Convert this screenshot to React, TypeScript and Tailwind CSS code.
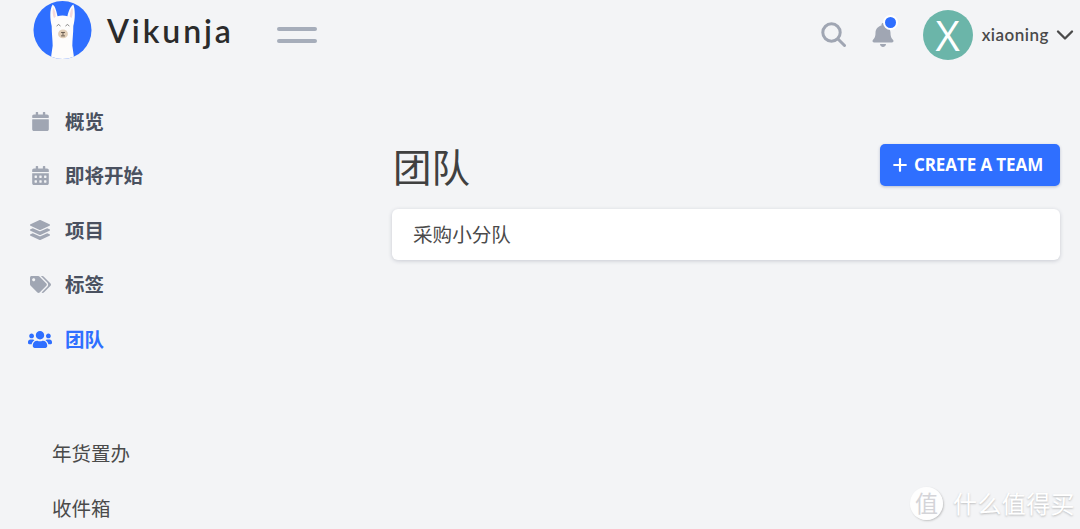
import { FaBell, FaCalendar, FaCalendarAlt, FaLayerGroup, FaTags, FaUsers } from "react-icons/fa";
import { FiChevronDown, FiPlus } from "react-icons/fi";

const cjk = "font-['Open_Sans','Noto_Sans_CJK_SC',sans-serif]";

const navItems = [
  { label: "概览", Icon: FaCalendar, size: "text-[19px]" },
  { label: "即将开始", Icon: FaCalendarAlt, size: "text-[19px]" },
  { label: "项目", Icon: FaLayerGroup, size: "text-[20px]" },
  { label: "标签", Icon: FaTags, size: "text-[21px]" },
  { label: "团队", Icon: FaUsers, size: "text-[25px]", active: true },
];

const Logo = () => (
  <svg viewBox="0 0 60 60" className="w-[59px] h-[60px]">
    <defs>
      <clipPath id="logo-clip">
        <circle cx="30" cy="30" r="29.5" />
      </clipPath>
    </defs>
    <circle cx="30" cy="30" r="29.5" fill="#2f6fff" />
    <g clipPath="url(#logo-clip)">
      <path
        d="M19 26 C17 18 17 8 20 4 C23 6 24 12 25 16 C28 15 32 15 35 16 C36 11 38 6 41 4 C43 9 43 18 41 26 C41 34 40 40 40 46 L42 60 L18 60 L20 46 C20 40 19 34 19 26 Z"
        fill="#fdfcfb"
      />
      <path d="M20.5 7 C19.5 11 20 15 21.5 18 L23 16 C23 12 22 9 20.5 7 Z" fill="#f3d9dc" />
      <path d="M40 7 C41 11 40.5 15 39 18 L37.5 16 C37.5 12 38.5 9 40 7 Z" fill="#f3d9dc" />
      <path d="M24 26 l2 -1.6 l2 1.6 M33 26 l2 -1.6 l2 1.6" stroke="#555" strokeWidth="0.7" fill="none" />
      <ellipse cx="30.5" cy="34" rx="5" ry="4.5" fill="#e2cfb8" />
      <path d="M28.5 32.5 h4 M30.5 32.5 v3 M28.5 36 h4" stroke="#4a4038" strokeWidth="0.8" fill="none" />
    </g>
  </svg>
);

const SearchIcon = () => (
  <svg viewBox="0 0 25 25" className="w-[25px] h-[25px]" fill="none" stroke="#a0a6b3" strokeWidth="3" strokeLinecap="round">
    <circle cx="10.5" cy="10.5" r="8.7" />
    <path d="M17 17 L23.5 23.5" />
  </svg>
);

export default function App() {
  return (
    <div className={`relative w-[1080px] h-[529px] overflow-hidden bg-[#f3f4f6] text-[#404040] ${cjk}`}>
      <header className="h-[60px] flex items-center">
        <div className="ml-[33px]">
          <Logo />
        </div>
        <span className="ml-[15px] w-[126px] text-[32px] leading-none font-['Lato',sans-serif] font-semibold tracking-[2.9px] text-[#2b2b2b] mt-[2px]">
          Vikunja
        </span>
        <div className="ml-[44px] w-10 flex flex-col gap-[8px] mt-[10px]">
          <div className="h-1 rounded-full bg-[#a6adba]" />
          <div className="h-1 rounded-full bg-[#a6adba]" />
        </div>
        <div className="ml-auto mt-[9px]">
          <SearchIcon />
        </div>
        <div className="relative ml-[25px] mt-[10px]">
          <FaBell className="text-[24px] text-[#a0a6b3]" />
          <div className="absolute -top-[8px] right-[-3px] w-[11px] h-[11px] rounded-full bg-[#2f6fff] border-2 border-white box-content" />
        </div>
        <div className="ml-[28px] mt-[10px] w-[50px] h-[50px] rounded-full bg-[#6bb5a9] flex items-center justify-center">
          <span className="text-[42px] leading-none font-['Open_Sans',sans-serif] font-normal text-white">X</span>
        </div>
        <span className="ml-[9px] mt-[10px] text-[17px] font-['Lato',sans-serif] font-semibold text-[#4a4a4a] tracking-[0.5px]">
          xiaoning
        </span>
        <FiChevronDown className="ml-[2px] mr-[1px] mt-[10px] text-[28px] text-[#4a4a4a]" />
      </header>

      <div className="flex">
        <aside className="w-[392px] shrink-0 pt-[34px]">
          <nav className="flex flex-col">
            {navItems.map(({ label, Icon, size, active }) => (
              <div
                key={label}
                className={`h-[54.5px] flex items-center text-[19.5px] font-bold ${active ? "text-[#2f6fff]" : "text-[#4a5160]"}`}
              >
                <span className={`w-[24px] ml-[28px] mr-[13px] flex justify-center ${size} ${active ? "text-[#2f6fff]" : "text-[#a0a6b3]"}`}>
                  <Icon />
                </span>
                {label}
              </div>
            ))}
          </nav>
          <div className="mt-[60px] pl-[52px] flex flex-col text-[19.5px] text-[#4a4a4a]">
            <div className="h-[54.5px] flex items-center">年货置办</div>
            <div className="h-[54.5px] flex items-center">收件箱</div>
          </div>
        </aside>

        <main className="w-[668px] pt-[84px]">
          <div className="flex items-center justify-between h-[42px]">
            <h1 className="ml-[1px] text-[38.5px] leading-none mt-[5px]">团队</h1>
            <button className="w-[180px] h-[42px] rounded-[5px] bg-[#2f6fff] shadow-[0_1px_3px_rgba(40,60,120,0.3)] flex items-center pl-[10px] text-white text-[17px] font-bold font-['Open_Sans',sans-serif]">
              <FiPlus className="text-[20px] mr-[4px] stroke-[2.6]" />
              <span className="tracking-[-0.1px]">CREATE A TEAM</span>
            </button>
          </div>
          <div className="mt-[23px] h-[51px] rounded-[6px] bg-white shadow-[0_1px_4px_rgba(30,40,70,0.2)] flex items-center pl-[21px] text-[19.6px] text-[#4a4a4a]">
            采购小分队
          </div>
        </main>
      </div>

      {/* watermark */}
      <div className="absolute left-[910px] top-[487px] flex items-center text-white [text-shadow:0_1px_2px_rgba(120,120,120,0.45)]">
        <div className="w-[33px] h-[33px] rounded-full bg-white/90 shadow-[1px_1px_2px_rgba(120,120,120,0.4)] flex items-center justify-center text-[23px] text-[#d4d4d8] [text-shadow:none]">
          值
        </div>
        <span className="ml-[10px] text-[24px] leading-none tracking-[0.4px]">什么值得买</span>
      </div>
    </div>
  );
}
